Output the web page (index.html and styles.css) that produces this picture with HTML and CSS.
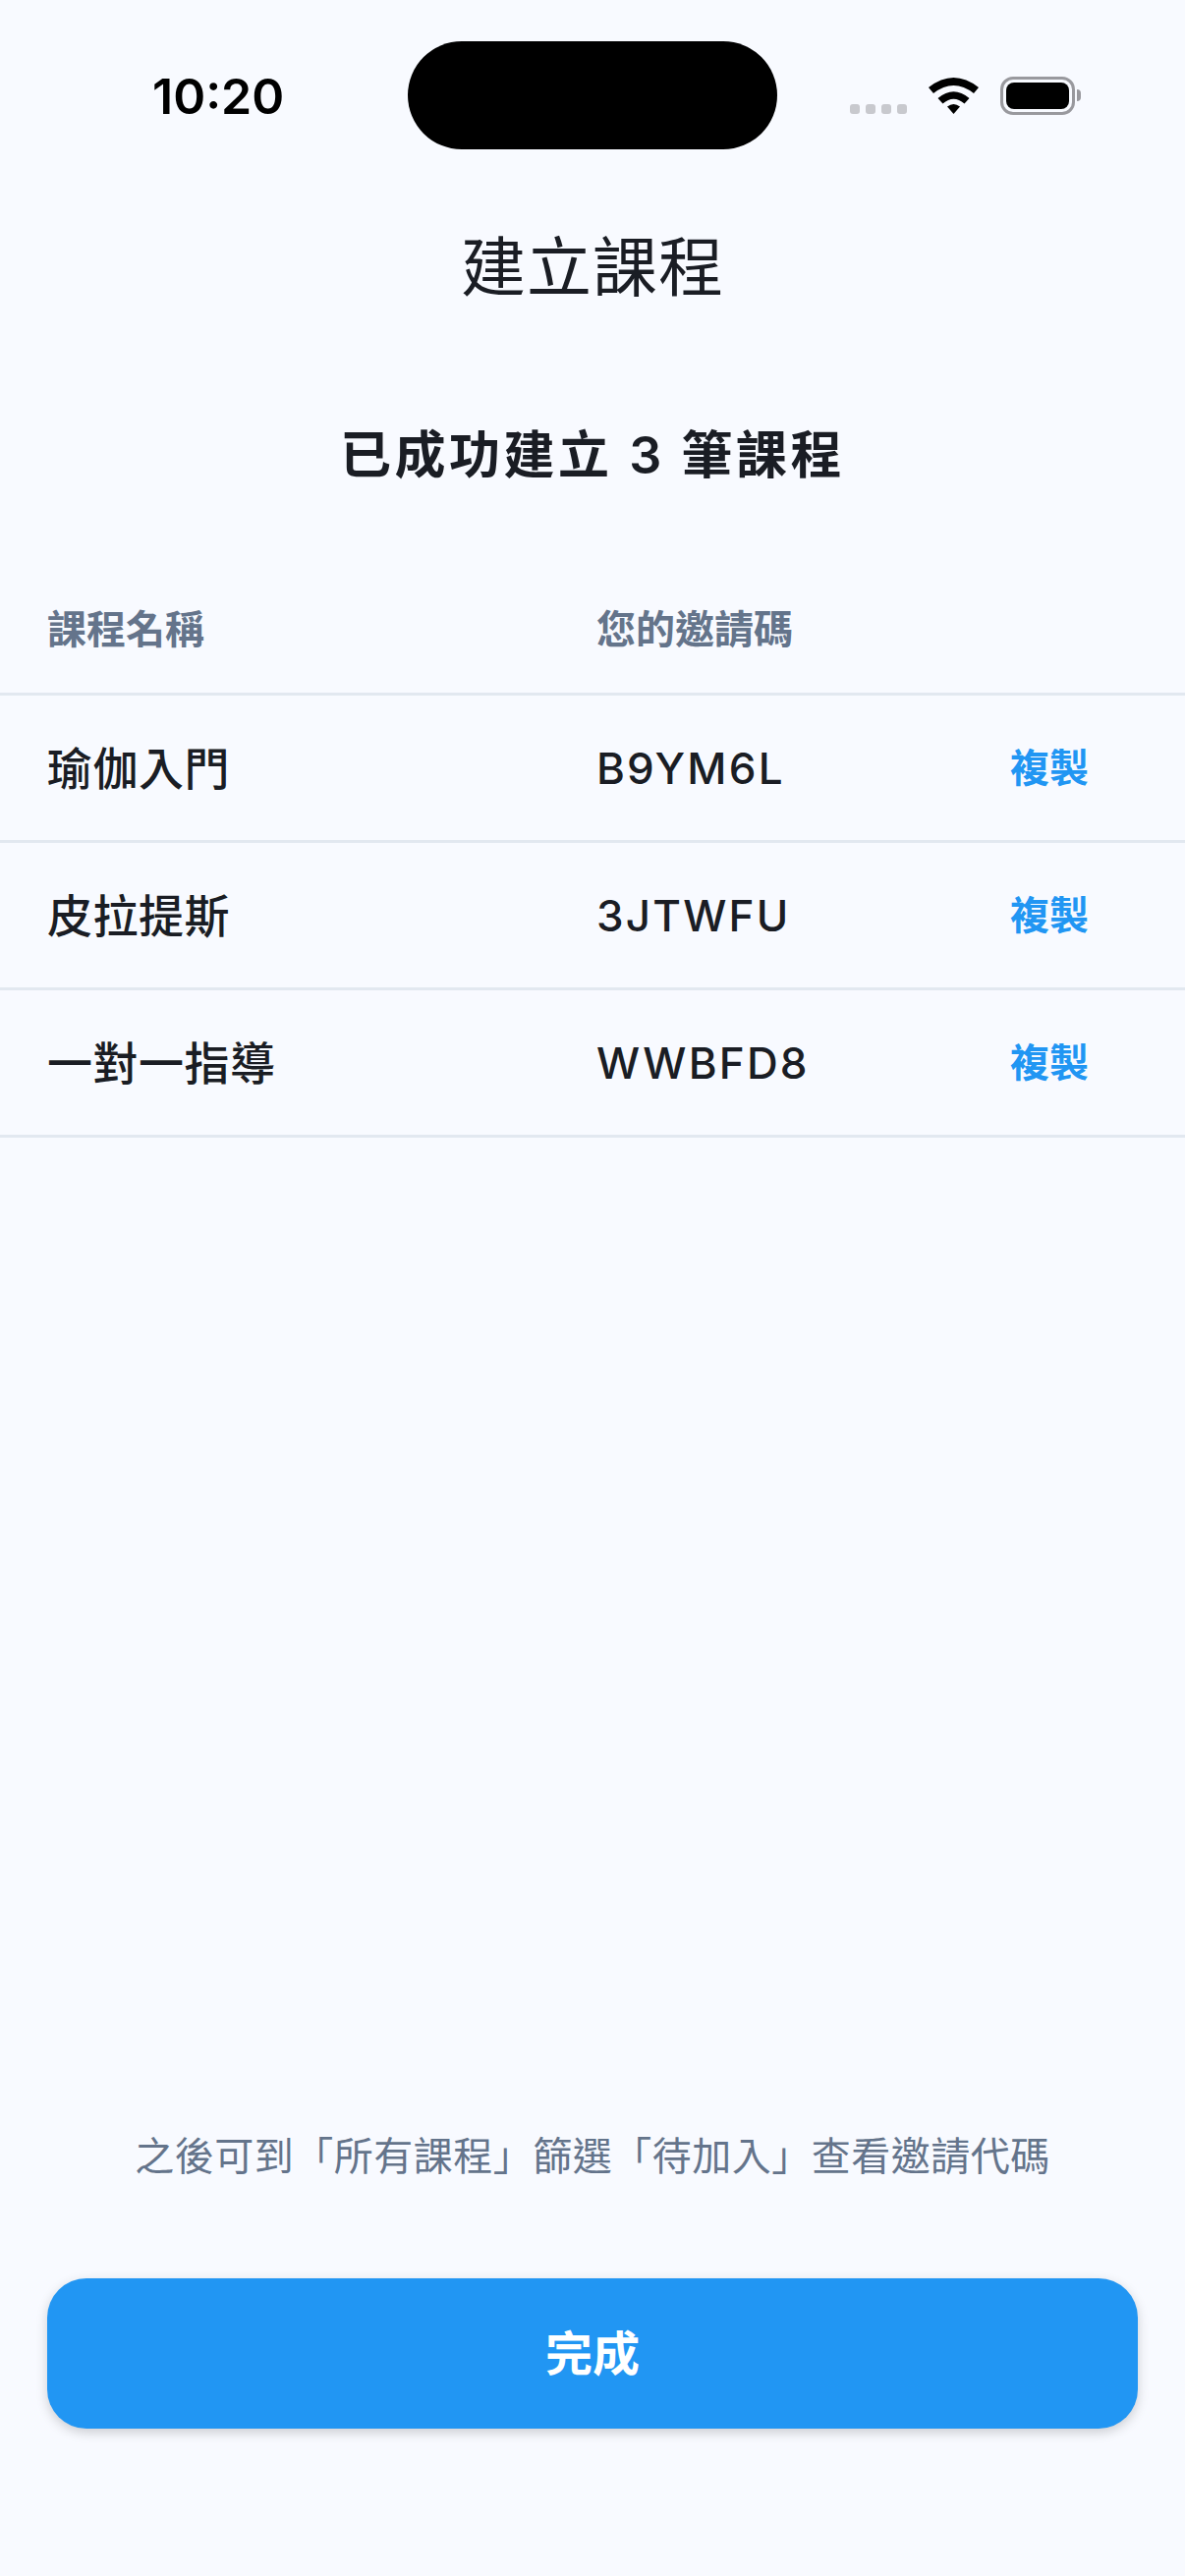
FILE: index.html
```html
<!DOCTYPE html>
<html lang="zh-Hant">
<head>
    <meta charset="UTF-8">
    <meta name="viewport" content="width=device-width, initial-scale=1.0">
    <title>建立課程</title>
    <link rel="stylesheet" href="styles.css">
</head>
<body>
    <div class="screen">
        <div class="status-bar">
            <div class="time">10:20</div>
            <div class="island"></div>
            <div class="status-icons">
                <div class="signal"><span></span><span></span><span></span><span></span></div>
                <svg class="wifi" width="51" height="37" viewBox="0 0 51 37">
                    <path d="M0 10Q25.5 -10 51 10L46 16Q25.5 0 5 16Z"/>
                    <path d="M9.5 21Q25.5 7.5 41.5 21L36.5 26.5Q25.5 17 14.5 26.5Z"/>
                    <path d="M19 29.5Q25.5 24.5 32 29.5L25.5 37Z"/>
                </svg>
                <div class="battery"><div class="battery-level"></div></div>
                <div class="battery-nub"></div>
            </div>
        </div>

        <h1 class="page-title">建立課程</h1>
        <h2 class="summary">已成功建立 3 筆課程</h2>

        <div class="course-table">
            <div class="row head">
                <div class="col-name">課程名稱</div>
                <div class="col-code">您的邀請碼</div>
            </div>
            <div class="row">
                <div class="col-name">瑜伽入門</div>
                <div class="col-code">B9YM6L</div>
                <div class="copy">複製</div>
            </div>
            <div class="row">
                <div class="col-name">皮拉提斯</div>
                <div class="col-code">3JTWFU</div>
                <div class="copy">複製</div>
            </div>
            <div class="row">
                <div class="col-name">一對一指導</div>
                <div class="col-code">WWBFD8</div>
                <div class="copy">複製</div>
            </div>
        </div>

        <div class="footer">
            <p class="hint">之後可到「所有課程」篩選「待加入」查看邀請代碼</p>
            <button class="done" type="button">完成</button>
        </div>
    </div>
</body>
</html>
```

FILE: styles.css
```css
* {
    box-sizing: border-box;
}
body {
    margin: 0;
    background: #f8faff;
    color: #1a1d24;
    font-family: Inter, "Noto Sans CJK TC", sans-serif;
}
.screen {
    width: 1206px;
    height: 2622px;
    display: flex;
    flex-direction: column;
    overflow: hidden;
}
.status-bar {
    height: 228px;
    padding: 42px 0 0 155px;
    display: flex;
    align-items: flex-start;
}
.time {
    width: 260px;
    margin-top: 31px;
    font-size: 50px;
    line-height: 50px;
    font-weight: 600;
    color: #000;
}
.island {
    width: 376px;
    height: 110px;
    border-radius: 55px;
    background: #000;
}
.status-icons {
    margin: 36px 0 0 74px;
    display: flex;
    align-items: flex-start;
}
.signal {
    display: flex;
    gap: 6px;
    margin-top: 28px;
}
.signal span {
    width: 10px;
    height: 10px;
    border-radius: 3px;
    background: #c8c9ce;
}
.wifi {
    margin: 1px 0 0 22px;
    fill: #000;
}
.battery {
    width: 76px;
    height: 39px;
    margin-left: 22px;
    padding: 3px;
    border: 3px solid #99999e;
    border-radius: 13px;
}
.battery-level {
    width: 100%;
    height: 100%;
    border-radius: 8px;
    background: #000;
}
.battery-nub {
    width: 4px;
    height: 12px;
    margin: 13px 0 0 2px;
    border-radius: 0 6px 6px 0;
    background: #99999e;
}
.page-title {
    margin: 0;
    height: 88px;
    font-size: 66px;
    line-height: 88px;
    font-weight: 400;
    letter-spacing: 1px;
    text-align: center;
}
.summary {
    margin: 113px 0 0;
    height: 70px;
    font-size: 52px;
    line-height: 70px;
    font-weight: 600;
    letter-spacing: 3.5px;
    text-align: center;
}
.course-table {
    margin-top: 76px;
}
.row {
    height: 150px;
    padding: 0 48px 0 48px;
    display: flex;
    align-items: center;
    border-bottom: 3px solid #e2e8f0;
    font-size: 46px;
    font-weight: 500;
}
.row.head {
    height: 133px;
    font-size: 40px;
    font-weight: 600;
    color: #64748b;
}
.col-name {
    width: 559px;
    padding-bottom: 6px;
    letter-spacing: 0.5px;
}
.head .col-name {
    padding-bottom: 4px;
    letter-spacing: 0;
}
.col-code {
    width: 421px;
    font-size: 44px;
    letter-spacing: 2.2px;
}
.head .col-code {
    padding-bottom: 4px;
    font-size: 40px;
    letter-spacing: 0;
}
.copy {
    padding-bottom: 6px;
    font-size: 40px;
    font-weight: 600;
    color: #2196f3;
}
.footer {
    margin-top: auto;
    padding: 0 48px 150px;
}
.hint {
    margin: 0 0 94px;
    font-size: 40px;
    line-height: 60px;
    letter-spacing: 0.5px;
    color: #64748b;
    text-align: center;
}
.done {
    display: block;
    width: 100%;
    height: 153px;
    padding-bottom: 8px;
    border: 0;
    border-radius: 40px;
    background: #2196f3;
    box-shadow: 0 4px 12px rgba(0, 0, 0, 0.18);
    color: #fff;
    font-family: inherit;
    font-size: 48px;
    font-weight: 600;
}
```
